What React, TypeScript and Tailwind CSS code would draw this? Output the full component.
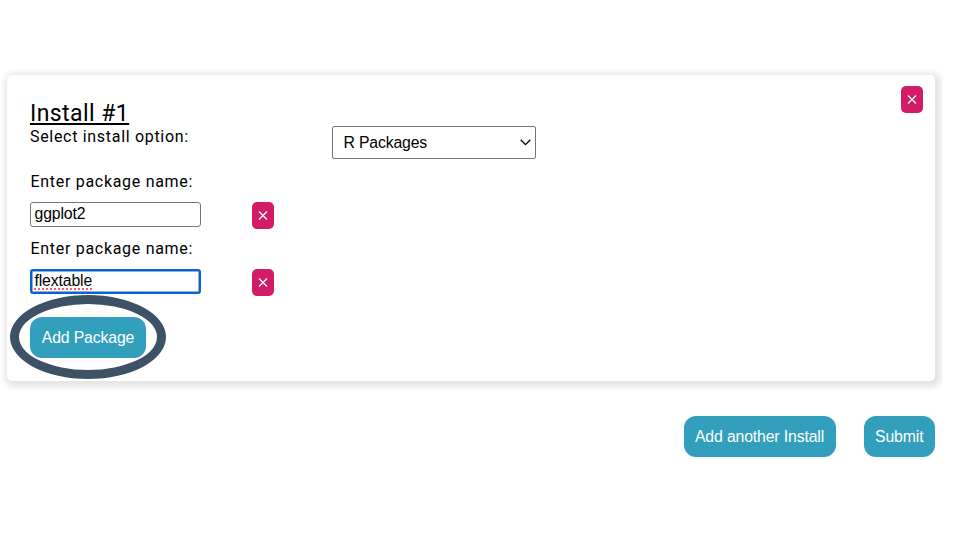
import React from 'react';

function RemoveButton() {
  return (
    <button aria-label="Remove" className="flex h-[27px] w-[22px] shrink-0 items-center justify-center rounded-[5px] bg-[#d31c67]">
      <svg width="10" height="9" viewBox="0 0 10 9" stroke="white" strokeWidth="1.3">
        <path d="M1 .5 9 8.5M9 .5 1 8.5" />
      </svg>
    </button>
  );
}

function ActionButton({ label, className }: { label: string; className: string }) {
  return (
    <button className={`flex h-[41px] items-center justify-center whitespace-nowrap rounded-[12px] bg-[#329fbc] text-[15.8px] tracking-[-0.14px] text-white ${className}`}>
      {label}
    </button>
  );
}

function PackageRow({ name, active = false }: { name: string; active?: boolean }) {
  return (
    <div className="h-[67px]">
      <div className="h-[30px] whitespace-nowrap pl-[0.5px] font-['Roboto',sans-serif] text-[16px] leading-[20px] tracking-[0.7px]">Enter package name:</div>
      <div className="flex w-[244px] items-start justify-between">
        <div
          className={`flex h-[25px] w-[171px] items-center rounded-[3px] bg-white pb-[1px] text-[15.8px] leading-[18px] tracking-[-0.14px] ${
            active ? 'border-2 border-[#0a62cf] pl-[2.5px] shadow-[inset_0_0_0_0.5px_#0a62cf]' : 'border border-[#767676] pl-[3.5px]'
          }`}
        >
          <span className={active ? 'underline decoration-[#ff5b55] decoration-dotted decoration-2 underline-offset-[2px] [text-decoration-skip-ink:none]' : ''}>
            {name}
          </span>
        </div>
        <RemoveButton />
      </div>
    </div>
  );
}

export default function App() {
  return (
    <main className="h-[540px] w-[943px] overflow-hidden bg-white pl-[7px] pt-[75px] font-['Liberation_Sans',Arial,sans-serif] text-black">
      <section className="h-[306px] w-[928px] rounded-[5px] bg-white pl-[23px] shadow-[2px_2px_6px_4px_rgba(0,0,0,0.11)]">
        <div className="flex h-[97px] pr-[12px]">
          <div className="w-[302px] pt-[25px] font-['Roboto',sans-serif]">
            <h1 className="h-[27px] whitespace-nowrap text-[23px] leading-[27px] tracking-[0.43px]">
              <span className="underline decoration-2 underline-offset-[2px] [text-decoration-skip-ink:none]">Install #1</span>
            </h1>
            <div className="whitespace-nowrap text-[16px] leading-[20px] tracking-[0.69px]">Select install option:</div>
          </div>
          <div className="mt-[51px] flex h-[33px] w-[204px] items-center justify-between rounded-[2px] border border-[#767676] pl-[10.5px] pr-[4px] text-[15.8px] tracking-[-0.17px]">
            <span>R Packages</span>
            <svg width="11" height="7" viewBox="0 0 11 7" fill="none" stroke="black" strokeWidth="1.3">
              <path d="m.7 .8 4.8 4.8L10.3 .8" />
            </svg>
          </div>
          <div className="ml-auto pt-[11px]"><RemoveButton /></div>
        </div>
        <PackageRow name="ggplot2" />
        <PackageRow name="flextable" active />
        <div className="relative mt-[11px] w-[116px]">
          <ActionButton label="Add Package" className="w-[116px]" />
          <div className="pointer-events-none absolute -left-[20px] -top-[22px] h-[84px] w-[156px] rounded-[50%] border-[9px] border-[#3e5267]" />
        </div>
      </section>
      <div className="mt-[35px] flex w-[928px] justify-end gap-[28px]">
        <ActionButton label="Add another Install" className="w-[152px]" />
        <ActionButton label="Submit" className="w-[71.5px]" />
      </div>
    </main>
  );
}
